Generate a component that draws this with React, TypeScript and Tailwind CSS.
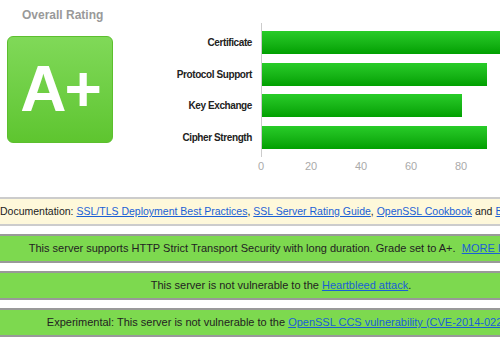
const bars = [
  { label: "Certificate", value: 100 },
  { label: "Protocol Support", value: 90 },
  { label: "Key Exchange", value: 80 },
  { label: "Cipher Strength", value: 90 },
];

const ticks = [0, 20, 40, 60, 80, 100];

function Link({ children }: { children: React.ReactNode }) {
  return <a className="text-[#1a5fd6] underline">{children}</a>;
}

function Notice({ children, tone = "green" }: { children: React.ReactNode; tone?: "green" | "doc" }) {
  const cls =
    tone === "doc"
      ? "bg-[#fef8da] border-t-2 border-b-2 border-[#cccccc] text-[10.5px]"
      : "bg-[#7dd94f] border-t-2 border-b-2 border-[#999999] text-[11px]";
  return (
    <div className={`w-[562px] h-[29px] leading-[25px] text-center whitespace-nowrap text-[#222] ${cls}`}>
      {children}
    </div>
  );
}

export default function App() {
  return (
    <div className="w-[500px] h-[341px] overflow-hidden bg-white font-['Liberation_Sans',Arial,sans-serif]">
      <div className="flex">
        <div className="w-[120px] shrink-0 pl-[7px] pt-[7px]">
          <div className="text-[12px] font-bold text-[#999] pl-[15px] leading-[16px]">Overall Rating</div>
          <div className="mt-[13px] w-[106px] h-[107px] rounded-[6px] border border-[#5cbf2e] bg-gradient-to-b from-[#80d958] to-[#5ec52f] flex items-center justify-center">
            <span className="text-white font-bold text-[64px] leading-none tracking-[-2px] -mt-[2px]">A+</span>
          </div>
        </div>

        <div className="relative flex-1 h-[178px]">
          {/* axis */}
          <div className="absolute left-[141px] top-[23px] h-[134px] w-px bg-[#ccc]" />
          <div className="absolute left-0 top-[31px] flex flex-col gap-[8.5px]">
            {bars.map((b) => (
              <div key={b.label} className="flex items-center h-[23px]">
                <div className="w-[133px] text-right text-[10px] font-bold tracking-[-0.4px] text-[#222] pr-px">{b.label}</div>
                <div className="w-[9px]" />
                <div
                  className="h-[23px] bg-gradient-to-b from-[#28cc28] to-[#00a000]"
                  style={{ width: b.value * 2.5 }}
                />
              </div>
            ))}
          </div>
          {ticks.map((t) => (
            <div
              key={t}
              className="absolute top-[158px] w-[30px] -ml-[15px] text-center text-[11px] text-[#aaa]"
              style={{ left: 141 + t * 2.5 }}
            >
              {t}
            </div>
          ))}
        </div>
      </div>

      <div className="flex flex-col gap-[8px] mt-[19px]">
        <Notice tone="doc">
          Documentation: <Link>SSL/TLS Deployment Best Practices</Link>, <Link>SSL Server Rating Guide</Link>,{" "}
          <Link>OpenSSL Cookbook</Link> and <Link>Bulletproof SSL and TLS</Link>
        </Notice>
        <Notice>
          This server supports HTTP Strict Transport Security with long duration. Grade set to A+.&nbsp;&nbsp;
          <Link>MORE INFO »</Link>
        </Notice>
        <Notice>
          This server is not vulnerable to the <Link>Heartbleed attack</Link>.
        </Notice>
        <Notice>
          Experimental: This server is not vulnerable to the <Link>OpenSSL CCS vulnerability (CVE-2014-0224)</Link>.
        </Notice>
      </div>
    </div>
  );
}
